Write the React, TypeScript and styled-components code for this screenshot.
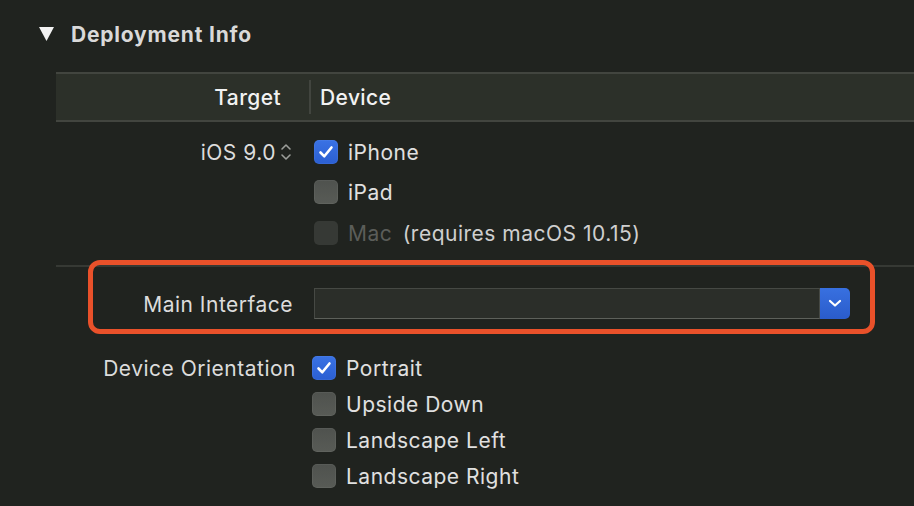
import styled, { createGlobalStyle } from 'styled-components';

const GlobalStyle = createGlobalStyle`
  html, body {
    margin: 0;
    padding: 0;
    background: #20231f;
  }
  body {
    font-family: Inter, "Noto Sans", "Liberation Sans", sans-serif;
    color: #dedede;
    -webkit-font-smoothing: antialiased;
  }
`;

const Page = styled.div`
  width: 914px;
  height: 506px;
  overflow: hidden;
  background: #20231f;
`;

const SectionTitle = styled.div`
  height: 72px;
  display: flex;
  align-items: center;
  padding-left: 39px;
  gap: 17px;
  box-sizing: border-box;
  padding-bottom: 4px;
  font-size: 21px;
  font-weight: 700;
  color: #d9d9d9;
  letter-spacing: 0.8px;
`;

const TableHeader = styled.div`
  margin-left: 56px;
  height: 50px;
  box-sizing: border-box;
  border-top: 2px solid #42453f;
  border-bottom: 2px solid #42453f;
  background: #2c3029;
  display: flex;
  align-items: center;
  font-size: 21px;
  font-weight: 500;
  letter-spacing: 0.4px;
  color: #f2f2f2;
`;

const HeaderCell = styled.div<{ $width?: number }>`
  width: ${(p) => (p.$width ? `${p.$width}px` : 'auto')};
  text-align: right;
  padding-right: 28px;
  box-sizing: border-box;
  flex-shrink: 0;
`;

const HeaderDivider = styled.div`
  width: 2px;
  height: 34px;
  background: #42453f;
  margin-right: 9px;
`;

const Row = styled.div<{ $pad?: string }>`
  position: relative;
  margin-left: 56px;
  display: grid;
  grid-template-columns: 240px 1fr;
  column-gap: 18px;
  padding: ${(p) => p.$pad || '0'};
`;

const Label = styled.div<{ $h: number; $inset?: number }>`
  height: ${(p) => p.$h}px;
  display: flex;
  align-items: center;
  justify-content: flex-end;
  padding-right: ${(p) => p.$inset || 0}px;
  font-size: 21px;
  letter-spacing: 0.5px;
  color: #dcdcdc;
  white-space: nowrap;
`;

const Options = styled.div`
  display: flex;
  flex-direction: column;
`;

const Option = styled.div<{ $h: number; $x?: number }>`
  height: ${(p) => p.$h}px;
  display: flex;
  align-items: center;
  gap: 10px;
  margin-left: ${(p) => p.$x || 0}px;
  font-size: 21px;
  letter-spacing: 0.5px;
  color: #e0e0e0;
  white-space: nowrap;
`;

const Box = styled.span<{ $checked?: boolean; $disabled?: boolean }>`
  width: 24px;
  height: 24px;
  border-radius: 5px;
  box-sizing: border-box;
  display: flex;
  align-items: center;
  justify-content: center;
  flex-shrink: 0;
  background: ${(p) =>
    p.$checked
      ? 'linear-gradient(#3a72e4, #2b5fd2)'
      : p.$disabled
      ? '#363935'
      : 'linear-gradient(#4f524e, #585b56)'};
  box-shadow: ${(p) => (p.$disabled ? 'none' : 'inset 0 0 0 1px rgba(255,255,255,0.05)')};
`;

const Muted = styled.span`
  color: #5b5d59;
`;

const Note = styled.span`
  color: #cfcfcf;
  margin-left: 4px;
`;

const Stepper = styled.span`
  display: inline-flex;
  margin-left: 4px;
`;

const Separator = styled.div`
  margin-left: 56px;
  margin-top: 11px;
  height: 2px;
  background: #363934;
`;

const Combo = styled.div`
  display: flex;
  height: 32px;
  width: 536px;
`;

const ComboField = styled.div`
  flex: 1;
  box-sizing: border-box;
  background: #2b2e29;
  border: 1px solid #464944;
  border-bottom-color: #5d605a;
  margin: 0 0 1px;
`;

const ComboButton = styled.div`
  width: 30px;
  height: 31px;
  border-radius: 0 5px 5px 0;
  background: linear-gradient(#3870e0, #2a5ccb);
  display: flex;
  align-items: center;
  justify-content: center;
`;

const Highlight = styled.div`
  position: absolute;
  left: 32px;
  top: -7px;
  width: 787px;
  height: 74px;
  box-sizing: border-box;
  border: 5px solid #e9512a;
  border-radius: 12px;
  pointer-events: none;
`;

const Check = () => (
  <svg width="16" height="14" viewBox="0 0 16 14">
    <path d="M2.5 7.5 L6.3 11.3 L13.5 2.5" fill="none" stroke="#fff" strokeWidth="2.6" strokeLinecap="round" strokeLinejoin="round" />
  </svg>
);

const CheckBox = ({ checked, disabled }: { checked?: boolean; disabled?: boolean }) => (
  <Box $checked={checked} $disabled={disabled}>
    {checked && <Check />}
  </Box>
);

const Triangle = () => (
  <svg width="15" height="14" viewBox="0 0 15 14">
    <path d="M0 0 H15 L7.5 14 Z" fill="#f2f2f2" />
  </svg>
);

const UpDown = () => (
  <svg width="12" height="20" viewBox="0 0 12 20">
    <path d="M2 7 L6 3 L10 7 M2 13 L6 17 L10 13" fill="none" stroke="#9c9e9a" strokeWidth="1.6" strokeLinecap="round" strokeLinejoin="round" />
  </svg>
);

const Chevron = () => (
  <svg width="14" height="9" viewBox="0 0 14 9">
    <path d="M2 2 L7 6.5 L12 2" fill="none" stroke="#fff" strokeWidth="2.2" strokeLinecap="round" strokeLinejoin="round" />
  </svg>
);

export default function App() {
  return (
    <Page>
      <GlobalStyle />
      <SectionTitle>
        <Triangle />
        Deployment Info
      </SectionTitle>
      <TableHeader>
        <HeaderCell $width={253}>Target</HeaderCell>
        <HeaderDivider />
        <span>Device</span>
      </TableHeader>

      <Row $pad="10px 0 0">
        <Label $h={40} $inset={4}>
          iOS 9.0
          <Stepper>
            <UpDown />
          </Stepper>
        </Label>
        <Options>
          <Option $h={40}>
            <CheckBox checked />
            iPhone
          </Option>
          <Option $h={40}>
            <CheckBox />
            iPad
          </Option>
          <Option $h={42}>
            <CheckBox disabled />
            <span>
              <Muted>Mac</Muted> <Note>(requires macOS 10.15)</Note>
            </span>
          </Option>
        </Options>
      </Row>

      <Separator />

      <Row $pad="21px 0 30px">
        <Label $h={32} $inset={3}>Main Interface</Label>
        <Combo>
          <ComboField />
          <ComboButton>
            <Chevron />
          </ComboButton>
        </Combo>
        <Highlight />
      </Row>

      <Row>
        <Label $h={36}>Device Orientation</Label>
        <Options>
          <Option $h={36} $x={-2}>
            <CheckBox checked />
            Portrait
          </Option>
          <Option $h={36} $x={-2}>
            <CheckBox />
            Upside Down
          </Option>
          <Option $h={36} $x={-2}>
            <CheckBox />
            Landscape Left
          </Option>
          <Option $h={36} $x={-2}>
            <CheckBox />
            Landscape Right
          </Option>
        </Options>
      </Row>
    </Page>
  );
}
